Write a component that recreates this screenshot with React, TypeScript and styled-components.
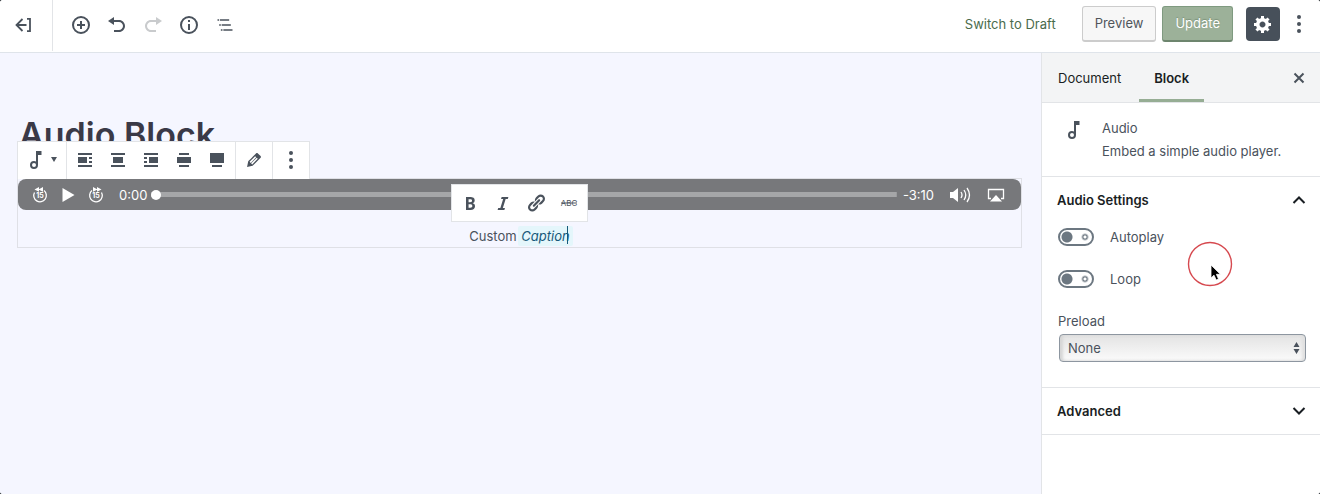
import React, { useState } from "react";
import styled, { createGlobalStyle, css } from "styled-components";

const ink = "#4a525c";
const line = "#e2e4e7";

const GlobalStyle = createGlobalStyle`
  *, *::before, *::after { box-sizing: border-box; }
  html, body, #root { height: 100%; }
  body {
    margin: 0;
    background: #23282d;
    font-family: Inter, "Liberation Sans", sans-serif;
    font-size: 13px;
    line-height: 20px;
    color: ${ink};
  }
  button, input, select { font: inherit; color: inherit; }
`;

const Screen = styled.div`
  display: flex;
  flex-direction: column;
  min-height: 100%;
  background: #fff;
  border-radius: 3px;
  overflow: hidden;
`;

const Header = styled.header`
  display: flex;
  align-items: center;
  height: 53px;
  padding-bottom: 2px;
  border-bottom: 1px solid #dfe4ea;
  background: #fff;
`;

const IconButton = styled.button<{ $width?: number; $height?: number }>`
  display: flex;
  align-items: center;
  justify-content: center;
  flex: none;
  width: ${(p) => p.$width ?? 36}px;
  height: ${(p) => p.$height ?? 36}px;
  padding: 0;
  border: 0;
  background: transparent;
  color: ${ink};
  &:disabled { color: #c9cbcd; }
`;

const BackArea = styled.div`
  display: flex;
  align-items: center;
  justify-content: center;
  width: 53px;
  height: 52px;
  padding-right: 4px;
  border-right: 1px solid ${line};
`;

const HeaderTools = styled.div`
  display: flex;
  flex: 1;
  padding-left: 10px;
`;

const HeaderActions = styled.div`
  display: flex;
  align-items: center;
  padding: 0 11px 2px 0;
`;

const DraftButton = styled.button`
  padding: 0;
  margin-right: 26px;
  border: 0;
  background: transparent;
  color: #4a6b4c;
`;

const ActionButton = styled.button<{ $primary?: boolean }>`
  height: 36px;
  padding: 0 12px 1px;
  margin-right: 6px;
  border: 1px solid #ccc;
  border-bottom-width: 2px;
  border-radius: 3px;
  background: #f7f7f7;
  color: #50555b;
  ${(p) =>
    p.$primary &&
    css`
      margin-right: 13px;
      border-color: #7f9a80 #7f9a80 #6d856e;
      background: #9cb199;
      color: #fff;
      text-shadow: 0 -1px 1px #7c917a;
    `}
`;

const SettingsButton = styled(IconButton)`
  margin-right: 9px;
  border-radius: 4px;
  background: #47505a;
  color: #fff;
`;

const Body = styled.div`
  display: flex;
  flex: 1;
`;

const Editor = styled.main`
  flex: 1;
  padding: 60px 19px 0 17px;
  background: #f5f6ff;
`;

const Title = styled.h1`
  margin: 0;
  padding-left: 2px;
  font-size: 34px;
  line-height: 44px;
  height: 65px;
  font-weight: 600;
  color: #3a3947;
`;

const Block = styled.figure`
  position: relative;
  margin: 0;
  border: 1px solid #dfe0e6;
`;

const BlockToolbar = styled.div`
  position: absolute;
  left: -1px;
  bottom: 100%;
  display: flex;
  height: 38px;
  border: 1px solid ${line};
  border-bottom: 0;
  background: #fff;
`;

const ToolGroup = styled.div`
  display: flex;
  align-items: center;
  padding: 0 2px 2px 1px;
  & + & { border-left: 1px solid ${line}; }
`;

const Player = styled.div`
  display: flex;
  align-items: center;
  height: 31px;
  padding: 0 7px 0 8px;
  border-radius: 8px;
  background: #77787b;
  color: #fff;
  ${IconButton} { color: #fff; }
`;

const Time = styled.span`
  margin: 0 4px 0 9px;
  color: #fff;
`;

const Remaining = styled(Time)`
  margin: 0 8px 0 6px;
`;

const Seek = styled.input`
  flex: 1;
  min-width: 0;
  height: 10px;
  margin: 0;
  appearance: none;
  background: linear-gradient(#a5a6a8, #a5a6a8) center / 100% 5px no-repeat;
  &::-webkit-slider-thumb {
    appearance: none;
    width: 10px;
    height: 10px;
    border-radius: 50%;
    background: #fff;
  }
`;

const Caption = styled.figcaption`
  padding: 16px 0 1px;
  text-align: center;
`;

const Selected = styled.em`
  position: relative;
  padding: 2px 3px;
  margin: 0 -3px 0 -2px;
  border-radius: 2px;
  background: #e4f6fb;
  color: #17597a;
`;

const Caret = styled.i`
  position: absolute;
  right: 5px;
  top: 0;
  width: 1px;
  height: 18px;
  background: #17597a;
`;

const FormatToolbar = styled.div`
  position: absolute;
  top: 5px;
  left: 50%;
  display: flex;
  align-items: center;
  width: 137px;
  height: 38px;
  margin-left: -69px;
  padding: 0 2px;
  border: 1px solid ${line};
  background: #fff;
`;

const Sidebar = styled.aside`
  width: 279px;
  flex: none;
  border-left: 1px solid ${line};
  background: #fff;
`;

const Tabs = styled.div`
  display: flex;
  align-items: center;
  height: 50px;
  padding-right: 5px;
  border-bottom: 1px solid ${line};
  background: #f3f4f5;
`;

const Tab = styled.button<{ $active?: boolean }>`
  height: 49px;
  padding: 3px 15px 0 16px;
  border: 0;
  border-bottom: 3px solid ${(p) => (p.$active ? "#96ad94" : "transparent")};
  background: transparent;
  color: #191e23;
  font-weight: ${(p) => (p.$active ? 600 : 400)};
  & + & {
    margin-left: 3px;
    padding-left: 15px;
  }
`;

const Spacer = styled.span`
  flex: 1;
`;

const Card = styled.section`
  display: flex;
  gap: 16px;
  padding: 15px 16px 15px 20px;
  border-bottom: 1px solid ${line};
`;

const CardTitle = styled.h2`
  margin: 0 0 3px;
  font-size: 13px;
  font-weight: 400;
`;

const CardText = styled.p`
  margin: 0;
`;

const Panel = styled.section`
  border-bottom: 1px solid ${line};
`;

const PanelHeading = styled.h2`
  margin: 0;
`;

const PanelToggle = styled.button`
  display: flex;
  align-items: center;
  justify-content: space-between;
  width: 100%;
  height: 46px;
  padding: 0 12px 0 15px;
  border: 0;
  background: transparent;
  color: #191e23;
  font-size: 13px;
  font-weight: 600;
`;

const PanelBody = styled.div`
  padding: 4px 14px 25px 16px;
`;

const ToggleRow = styled.label`
  display: flex;
  align-items: center;
  gap: 16px;
  height: 20px;
  margin-bottom: 22px;
`;

const Switch = styled.input`
  appearance: none;
  width: 36px;
  height: 18px;
  margin: 0;
  border: 2px solid #6c7781;
  border-radius: 9px;
  background:
    radial-gradient(circle at 7px 7px, #6c7781 5px, transparent 6px),
    radial-gradient(circle at 25px 7px, transparent 1px, #6c7781 2px, transparent 4px);
  &:checked { background: radial-gradient(circle at 25px 7px, #6c7781 5px, transparent 6px); }
`;

const FieldLabel = styled.label`
  display: block;
  margin-bottom: 3px;
`;

const SelectWrap = styled.div`
  position: relative;
  margin-left: 1px;
`;

const Select = styled.select`
  display: block;
  appearance: none;
  width: 100%;
  height: 28px;
  padding: 0 8px;
  border: 1px solid #8d96a0;
  border-radius: 4px;
  background: linear-gradient(#e3e3e3, #fbfbfb);
  box-shadow: inset 3px 0 3px #d6d6d6, inset -3px 0 3px #e0e0e0;
`;

const SelectArrows = styled.svg`
  position: absolute;
  right: 6px;
  top: 8px;
  pointer-events: none;
`;

const Pointer = styled.svg`
  position: absolute;
  top: 241px;
  right: 87px;
  pointer-events: none;
`;

const Icon = ({ children, size = 20, box = 20 }: { children: React.ReactNode; size?: number; box?: number }) => (
  <svg width={size} height={size} viewBox={`0 0 ${box} ${box}`} fill="currentColor" aria-hidden="true">
    {children}
  </svg>
);

const NoteIcon = () => (
  <Icon size={24} box={24}>
    <path d="M12 3v10.550A3.900 3.900 0 0 0 10 13a4 4 0 1 0 4 4V7h3.500V3H12zm-2 16a2 2 0 1 1 0-4 2 2 0 0 1 0 4z" />
  </Icon>
);

const DotsIcon = () => (
  <Icon>
    <circle cx="10" cy="3" r="2" />
    <circle cx="10" cy="10" r="2" />
    <circle cx="10" cy="17" r="2" />
  </Icon>
);

const undoPath = "M12 5H7V2L1 6l6 4V7h5c2.200 0 4 1.800 4 4s-1.800 4-4 4H7v2h5c3.300 0 6-2.700 6-6s-2.700-6-6-6z";

const SkipIcon = ({ forward }: { forward?: boolean }) => (
  <Icon size={18} box={18}>
    <g transform={forward ? "translate(18 0) scale(-1 1)" : undefined}>
      <path d="M3.500 6.500A6.300 6.300 0 1 0 13 4.600" fill="none" stroke="currentColor" strokeWidth="1.300" />
      <path d="M3.500 3.400 8 1v4.800zM7.500 3.400 12 1v4.800z" />
    </g>
    <text x="9" y="12" textAnchor="middle" fontSize="7" fontWeight="700">15</text>
  </Icon>
);

const alignments = [
  { label: "Align left", d: "M3 3h14v2H3zM3 7h9v6H3zM14 7h3v2h-3zM14 11h3v2h-3zM3 15h14v2H3z" },
  { label: "Align center", d: "M3 3h14v2H3zM5 7h10v6H5zM3 15h14v2H3z" },
  { label: "Align right", d: "M3 3h14v2H3zM8 7h9v6H8zM3 7h3v2H3zM3 11h3v2H3zM3 15h14v2H3z" },
  { label: "Wide width", d: "M5 3h10v2H5zM3 7h14v6H3zM5 15h10v2H5z" },
  { label: "Full width", d: "M3 3h14v10H3zM5 15h10v2H5z" },
];

export default function App() {
  const [autoplay, setAutoplay] = useState(false);
  const [loop, setLoop] = useState(false);

  return (
    <>
      <GlobalStyle />
      <Screen>
        <Header>
          <BackArea>
            <IconButton aria-label="Back">
              <Icon>
                <path d="M13 3.800h3v12.400h-3M12.500 10H3M8.500 4 2.500 10l6 6" fill="none" stroke="currentColor" strokeWidth="1.800" />
              </Icon>
            </IconButton>
          </BackArea>
          <HeaderTools>
            <IconButton aria-label="Add block">
              <Icon>
                <circle cx="10" cy="10" r="8" fill="none" stroke="currentColor" strokeWidth="2" />
                <path d="M9 6h2v3h3v2h-3v3H9v-3H6V9h3z" />
              </Icon>
            </IconButton>
            <IconButton aria-label="Undo"><Icon><path d={undoPath} /></Icon></IconButton>
            <IconButton aria-label="Redo" disabled>
              <Icon><path d={undoPath} transform="translate(20 0) scale(-1 1)" /></Icon>
            </IconButton>
            <IconButton aria-label="Content structure">
              <Icon>
                <circle cx="10" cy="10" r="8" fill="none" stroke="currentColor" strokeWidth="2" />
                <path d="M9 5h2v2H9zM9 9h2v6H9z" />
              </Icon>
            </IconButton>
            <IconButton aria-label="Block navigation">
              <Icon box={24}>
                <path d="M5 5H3v2h2V5zm3 8h11v-2H8v2zm9-8H6v2h11V5zM7 11H5v2h2v-2zm0 8h2v-2H7v2zm3-2v2h11v-2H10z" />
              </Icon>
            </IconButton>
          </HeaderTools>
          <HeaderActions>
            <DraftButton>Switch to Draft</DraftButton>
            <ActionButton>Preview</ActionButton>
            <ActionButton $primary>Update</ActionButton>
            <SettingsButton $width={34} $height={34} aria-label="Settings">
              <Icon>
                <path d="M18 12h-2.180c-.170.700-.440 1.350-.810 1.930l1.540 1.540-2.100 2.100-1.540-1.540c-.580.360-1.230.630-1.910.790V19H8v-2.180c-.680-.160-1.330-.430-1.910-.790l-1.540 1.540-2.120-2.120 1.540-1.540c-.360-.580-.630-1.230-.790-1.910H1V9.030h2.170c.160-.700.440-1.350.800-1.940L2.430 5.550l2.100-2.100 1.540 1.540c.580-.370 1.240-.640 1.930-.810V2h3v2.180c.680.160 1.330.430 1.910.790l1.540-1.540 2.120 2.120-1.540 1.540c.360.590.640 1.240.800 1.940H18V12zm-8.500 1.500c1.660 0 3-1.340 3-3s-1.340-3-3-3-3 1.340-3 3 1.340 3 3 3z" />
              </Icon>
            </SettingsButton>
            <IconButton $width={20} aria-label="More tools"><DotsIcon /></IconButton>
          </HeaderActions>
        </Header>
        <Body>
          <Editor>
            <Title>Audio Block</Title>
            <Block>
              <BlockToolbar role="toolbar" aria-label="Block tools">
                <ToolGroup>
                  <IconButton $width={45} aria-label="Change block type">
                    <NoteIcon />
                    <svg width="12" height="8" viewBox="0 0 12 8" aria-hidden="true"><path d="M3 1h6L6 6z" fill={ink} /></svg>
                  </IconButton>
                </ToolGroup>
                <ToolGroup>
                  {alignments.map((a) => (
                    <IconButton key={a.label} $width={33} aria-label={a.label}><Icon><path d={a.d} /></Icon></IconButton>
                  ))}
                </ToolGroup>
                <ToolGroup>
                  <IconButton $width={33} aria-label="Edit audio">
                    <Icon>
                      <path d="M13.890 3.390l2.710 2.720c.460.460.420 1.240.030 1.640l-8.010 8.020-5.560 1.160 1.160-5.580s7.600-7.630 7.990-8.030c.390-.390 1.220-.390 1.680.070zm-2.730 2.790l-5.590 5.610 1.110 1.110 5.540-5.650zm-2.970 8.230l5.580-5.600-1.070-1.080-5.590 5.600z" />
                    </Icon>
                  </IconButton>
                </ToolGroup>
                <ToolGroup>
                  <IconButton $width={33} aria-label="More options"><DotsIcon /></IconButton>
                </ToolGroup>
              </BlockToolbar>
              <Player>
                <IconButton $width={28} $height={28} aria-label="Back 15 seconds"><SkipIcon /></IconButton>
                <IconButton $width={28} $height={28} aria-label="Play"><Icon><path d="M4.500 3v14L16.500 10z" /></Icon></IconButton>
                <IconButton $width={28} $height={28} aria-label="Forward 15 seconds"><SkipIcon forward /></IconButton>
                <Time>0:00</Time>
                <Seek type="range" min={0} max={190} defaultValue={0} aria-label="Position" />
                <Remaining>-3:10</Remaining>
                <IconButton $width={36} $height={28} aria-label="Mute">
                  <svg width="22" height="16" viewBox="0 0 22 16" aria-hidden="true">
                    <path d="M1 5h3l5-4v14l-5-4H1z" fill="#fff" />
                    <path d="M12 5q2 3 0 6M15 3q3.500 5 0 10M18 1q5 7 0 14" fill="none" stroke="#fff" strokeWidth="1.300" />
                  </svg>
                </IconButton>
                <IconButton $width={36} $height={28} aria-label="AirPlay">
                  <svg width="18" height="16" viewBox="0 0 18 16" aria-hidden="true">
                    <path d="M4 11.500H1.500v-9h15v9H14" fill="none" stroke="#fff" strokeWidth="1.300" />
                    <path d="M3 14.500 9 8l6 6.500z" fill="#fff" />
                  </svg>
                </IconButton>
              </Player>
              <FormatToolbar role="toolbar" aria-label="Text format">
                <IconButton $width={33} aria-label="Bold">
                  <Icon><path d="M6 4v13h4.540c1.370 0 2.460-.330 3.260-1 .800-.660 1.200-1.580 1.200-2.770 0-.840-.170-1.510-.510-2.010s-.900-.850-1.670-1.030v-.090c.570-.100 1.020-.400 1.360-.900s.510-1.130.510-1.910c0-1.140-.390-1.980-1.170-2.500C12.750 4.260 11.500 4 9.780 4H6zm2.570 5.150V6.260h1.360c.730 0 1.270.110 1.610.320.340.220.510.580.510 1.070 0 .540-.160.920-.470 1.150s-.820.350-1.510.350h-1.500zm0 2.190h1.600c1.440 0 2.160.530 2.160 1.610 0 .600-.170 1.050-.510 1.340s-.860.430-1.570.430H8.570v-3.380z" /></Icon>
                </IconButton>
                <IconButton $width={33} aria-label="Italic">
                  <Icon><path d="M14.780 6h-2.130l-2.800 9h2.120l-.620 2H4.600l.620-2h2.140l2.800-9H8.030l.620-2h6.750z" /></Icon>
                </IconButton>
                <IconButton $width={33} aria-label="Link">
                  <Icon><path d="M17.740 2.760c1.680 1.690 1.680 4.410 0 6.100l-1.530 1.520c-1.120 1.120-2.700 1.470-4.140 1.090l2.620-2.610.760-.770.760-.760c.840-.840.840-2.200 0-3.040-.840-.850-2.200-.850-3.040 0l-.770.760-3.380 3.380c-.370-1.440-.020-3.020 1.100-4.140l1.520-1.530c1.690-1.680 4.420-1.680 6.100 0zM8.590 13.430l5.340-5.340c.420-.420.420-1.100 0-1.520-.440-.430-1.130-.390-1.530 0l-5.330 5.340c-.420.420-.420 1.100 0 1.520.440.430 1.130.390 1.520 0zm-.760 2.290l4.140-4.150c.380 1.440.030 3.020-1.090 4.140l-1.520 1.530c-1.690 1.680-4.410 1.680-6.100 0-1.680-1.680-1.680-4.420 0-6.100l1.530-1.520c1.120-1.120 2.700-1.470 4.140-1.100l-4.140 4.150c-.850.840-.850 2.200 0 3.050.840.840 2.200.840 3.040 0z" /></Icon>
                </IconButton>
                <IconButton $width={33} aria-label="Strikethrough">
                  <Icon>
                    <text x="10" y="13" textAnchor="middle" fontSize="8">ABC</text>
                    <path d="M2 9.500h16v1H2z" />
                  </Icon>
                </IconButton>
              </FormatToolbar>
              <Caption>
                Custom <Selected>Caption<Caret /></Selected>
              </Caption>
            </Block>
          </Editor>
          <Sidebar>
            <Tabs>
              <Tab>Document</Tab>
              <Tab $active>Block</Tab>
              <Spacer />
              <IconButton $width={32} aria-label="Close settings">
                <Icon><path d="M5.500 5.500l9 9M14.500 5.500l-9 9" stroke="currentColor" strokeWidth="2" /></Icon>
              </IconButton>
            </Tabs>
            <Card>
              <NoteIcon />
              <div>
                <CardTitle>Audio</CardTitle>
                <CardText>Embed a simple audio player.</CardText>
              </div>
            </Card>
            <Panel>
              <PanelHeading>
                <PanelToggle aria-expanded="true">
                  Audio Settings
                  <Icon size={18} box={18}><path d="M3.500 12 9 6.500l5.500 5.500" fill="none" stroke="currentColor" strokeWidth="2" /></Icon>
                </PanelToggle>
              </PanelHeading>
              <PanelBody>
                <ToggleRow>
                  <Switch type="checkbox" checked={autoplay} onChange={(e) => setAutoplay(e.target.checked)} />
                  Autoplay
                </ToggleRow>
                <ToggleRow>
                  <Switch type="checkbox" checked={loop} onChange={(e) => setLoop(e.target.checked)} />
                  Loop
                </ToggleRow>
                <FieldLabel htmlFor="preload">Preload</FieldLabel>
                <SelectWrap>
                  <Select id="preload" defaultValue="none">
                    <option value="auto">Auto</option>
                    <option value="metadata">Metadata</option>
                    <option value="none">None</option>
                  </Select>
                  <SelectArrows width="7" height="12" viewBox="0 0 7 12" aria-hidden="true">
                    <path d="M.500 5 3.500 0l3 5zM.500 7l3 5 3-5z" fill={ink} />
                  </SelectArrows>
                </SelectWrap>
              </PanelBody>
            </Panel>
            <Panel>
              <PanelHeading>
                <PanelToggle aria-expanded="false">
                  Advanced
                  <Icon size={18} box={18}><path d="M3.500 6 9 11.500 14.500 6" fill="none" stroke="currentColor" strokeWidth="2" /></Icon>
                </PanelToggle>
              </PanelHeading>
            </Panel>
          </Sidebar>
        </Body>
        <Pointer width="46" height="46" viewBox="0 0 46 46" aria-hidden="true">
          <circle cx="23" cy="23" r="21.500" fill="none" stroke="#d6494f" strokeWidth="1.400" />
          <path d="M24 24v13l3-2.800 2.200 4.800 2.300-1-2.100-4.700h4z" fill="#000" stroke="#fff" strokeWidth=".8" />
        </Pointer>
      </Screen>
    </>
  );
}
